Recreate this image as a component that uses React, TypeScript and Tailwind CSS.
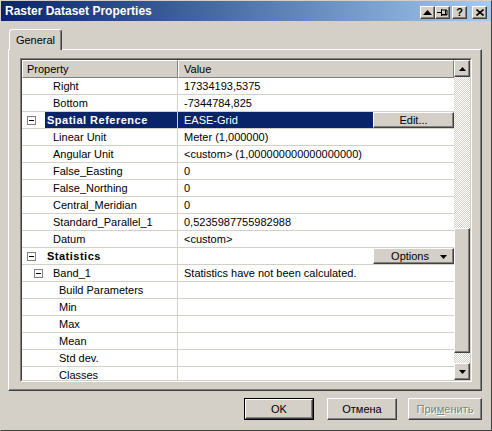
type Row = {
  label: string;
  value?: string;
  indent: "item" | "group" | "band" | "bandChild";
  selected?: boolean;
  button?: "edit" | "options";
};

const ROWS: Row[] = [
  { label: "Right", value: "17334193,5375", indent: "item" },
  { label: "Bottom", value: "-7344784,825", indent: "item" },
  {
    label: "Spatial Reference",
    value: "EASE-Grid",
    indent: "group",
    selected: true,
    button: "edit",
  },
  { label: "Linear Unit", value: "Meter (1,000000)", indent: "item" },
  {
    label: "Angular Unit",
    value: "<custom> (1,000000000000000000)",
    indent: "item",
  },
  { label: "False_Easting", value: "0", indent: "item" },
  { label: "False_Northing", value: "0", indent: "item" },
  { label: "Central_Meridian", value: "0", indent: "item" },
  { label: "Standard_Parallel_1", value: "0,5235987755982988", indent: "item" },
  { label: "Datum", value: "<custom>", indent: "item" },
  { label: "Statistics", indent: "group", button: "options" },
  {
    label: "Band_1",
    value: "Statistics have not been calculated.",
    indent: "band",
  },
  { label: "Build Parameters", indent: "bandChild" },
  { label: "Min", indent: "bandChild" },
  { label: "Max", indent: "bandChild" },
  { label: "Mean", indent: "bandChild" },
  { label: "Std dev.", indent: "bandChild" },
  { label: "Classes", indent: "bandChild" },
];

const raised =
  "border border-t-white border-l-white border-r-[#404040] border-b-[#404040] shadow-[inset_-1px_-1px_0_#808080] bg-[#d4d0c8]";

const dither =
  "bg-[image:repeating-conic-gradient(#ffffff_0%_25%,#d4d0c8_0%_50%)] bg-[length:2px_2px]";

function MinusBox() {
  return (
    <span className="flex h-[9px] w-[9px] shrink-0 items-center justify-center border border-[#808080] bg-white">
      <span className="h-px w-[5px] bg-black" />
    </span>
  );
}

function Triangle({ down }: { down?: boolean }) {
  return (
    <svg width="7" height="4" viewBox="0 0 7 4" className="shrink-0">
      <polygon
        points={down ? "0,0 7,0 3.5,4" : "0,4 7,4 3.5,0"}
        fill="#000"
      />
    </svg>
  );
}

function LabelCell({ row }: { row: Row }) {
  if (row.indent === "group") {
    return (
      <div className="flex h-full w-[156px] shrink-0 items-center border-r border-[#d4d0c8] pl-[5px]">
        <MinusBox />
        <span
          className={
            row.selected
              ? "ml-[9px] flex h-full flex-1 items-center bg-[#0a246a] pl-[2px] pt-px font-bold tracking-[0.5px] text-white"
              : "ml-[9px] flex h-full flex-1 items-center pl-[2px] pt-px font-bold tracking-[0.5px]"
          }
        >
          {row.label}
        </span>
      </div>
    );
  }
  if (row.indent === "band") {
    return (
      <div className="flex h-full w-[156px] shrink-0 items-center border-r border-[#d4d0c8] pl-[12px]">
        <MinusBox />
        <span className="ml-[10px] pt-px">{row.label}</span>
      </div>
    );
  }
  return (
    <div
      className={
        row.indent === "item"
          ? "flex h-full w-[156px] shrink-0 items-center border-r border-[#d4d0c8] pl-[31px] pt-px"
          : "flex h-full w-[156px] shrink-0 items-center border-r border-[#d4d0c8] pl-[37px] pt-px"
      }
    >
      {row.label}
    </div>
  );
}

function ValueCell({ row }: { row: Row }) {
  return (
    <div className="flex h-full flex-1 items-stretch">
      <div
        className={
          row.selected
            ? "flex flex-1 items-center bg-[#0a246a] pl-[6px] pt-px text-white"
            : "flex flex-1 items-center pl-[6px] pt-px"
        }
      >
        {row.value}
      </div>
      {row.button === "edit" && (
        <div
          className={`${raised} flex w-[81px] items-center justify-center pt-px`}
        >
          Edit...
        </div>
      )}
      {row.button === "options" && (
        <div
          className={`${raised} flex w-[81px] items-center justify-end gap-[11px] pr-[6px] pt-px`}
        >
          <span>Options</span>
          <Triangle down />
        </div>
      )}
    </div>
  );
}

function ScrollBar() {
  return (
    <div className="flex w-[16px] shrink-0 flex-col">
      <div className={`${raised} flex h-[17px] items-center justify-center`}>
        <Triangle />
      </div>
      <div className={`h-[151px] ${dither}`} />
      <div className={`${raised} h-[125px]`} />
      <div className={`h-[10px] ${dither}`} />
      <div className={`${raised} flex h-[17px] items-center justify-center`}>
        <Triangle down />
      </div>
    </div>
  );
}

function TitleButton({ children }: { children: React.ReactNode }) {
  return (
    <div
      className={`${raised} flex h-[13px] w-[15px] items-center justify-center`}
    >
      {children}
    </div>
  );
}

function PropertyGrid() {
  return (
    <div className="h-[324px] w-[452px] border border-t-[#808080] border-l-[#808080] border-r-white border-b-white">
      <div className="flex h-full w-full border border-t-[#404040] border-l-[#404040] border-r-[#d4d0c8] border-b-[#d4d0c8] bg-white">
        <div className="flex-1 overflow-hidden">
          <div className="flex h-[18px] bg-[#d4d0c8]">
            <div className="flex w-[156px] items-center border border-t-white border-l-white border-r-[#808080] border-b-[#808080] pl-[4px]">
              Property
            </div>
            <div className="flex flex-1 items-center border border-t-white border-l-white border-r-[#808080] border-b-[#808080] pl-[5px]">
              Value
            </div>
          </div>
          {ROWS.map((row) => (
            <div
              key={row.label}
              className="flex h-[17px] border-b border-[#d4d0c8]"
            >
              <LabelCell row={row} />
              <ValueCell row={row} />
            </div>
          ))}
        </div>
        <ScrollBar />
      </div>
    </div>
  );
}

export default function App() {
  return (
    <div className="h-[431px] w-[492px] overflow-hidden border border-t-[#d4d0c8] border-l-[#d4d0c8] border-r-[#404040] border-b-[#404040] bg-[#d4d0c8] font-['Liberation_Sans',Arial,sans-serif] text-[11px] text-black">
      {/* title bar */}
      <div className="flex h-[20px] items-center justify-between bg-gradient-to-r from-[#0a246a] to-[#a6caf0] pl-[4px] pr-[4px]">
        <span className="text-[12px] font-bold text-white">
          Raster Dataset Properties
        </span>
        <div className="mt-[3px] flex items-center">
          <TitleButton>
            <svg width="9" height="5" viewBox="0 0 9 5">
              <polygon points="0,5 9,5 4.5,0" fill="#000" />
            </svg>
          </TitleButton>
          <TitleButton>
            <svg width="11" height="9" viewBox="0 0 11 9">
              <path d="M0 4.5H4M4.5 1V8" stroke="#000" strokeWidth="1" />
              <path d="M5 2H10V7H5M8.5 2V7" stroke="#000" fill="none" />
              <path d="M5 6.5H10" stroke="#000" />
            </svg>
          </TitleButton>
          <div className="ml-[2px]">
            <TitleButton>
              <span className="text-[11px] font-bold leading-none">?</span>
            </TitleButton>
          </div>
          <div className="ml-[5px]">
            <TitleButton>
              <svg width="8" height="7" viewBox="0 0 8 7">
                <path
                  d="M0.5 0.5L7.5 6.5M7.5 0.5L0.5 6.5"
                  stroke="#000"
                  strokeWidth="1.6"
                />
              </svg>
            </TitleButton>
          </div>
        </div>
      </div>

      <div className="pl-[7px] pt-[8px]">
        {/* tab */}
        <div className="relative z-10 -mb-px ml-px flex h-[21px] w-[53px] items-center justify-center rounded-t-[3px] border border-b-0 border-t-white border-l-white border-r-[#404040] bg-[#d4d0c8] shadow-[inset_-1px_0_0_#808080]">
          General
        </div>
        {/* panel */}
        <div className="h-[342px] w-[474px] border border-t-white border-l-white border-r-[#404040] border-b-[#404040] pl-[11px] pt-[8px] shadow-[inset_-1px_-1px_0_#808080]">
          <PropertyGrid />
        </div>

        {/* buttons */}
        <div className="mt-[7px] flex w-[474px] justify-end">
          <div className="border border-black">
            <div
              className={`${raised} flex h-[20px] w-[68px] items-center justify-center`}
            >
              OK
            </div>
          </div>
          <div
            className={`${raised} ml-[13px] flex h-[22px] w-[70px] items-center justify-center`}
          >
            Отмена
          </div>
          <div
            className={`${raised} ml-[11px] flex h-[22px] w-[74px] items-center justify-center text-[#808080] [text-shadow:1px_1px_0_#fff]`}
          >
            При<span className="underline">м</span>енить
          </div>
        </div>
      </div>
    </div>
  );
}
